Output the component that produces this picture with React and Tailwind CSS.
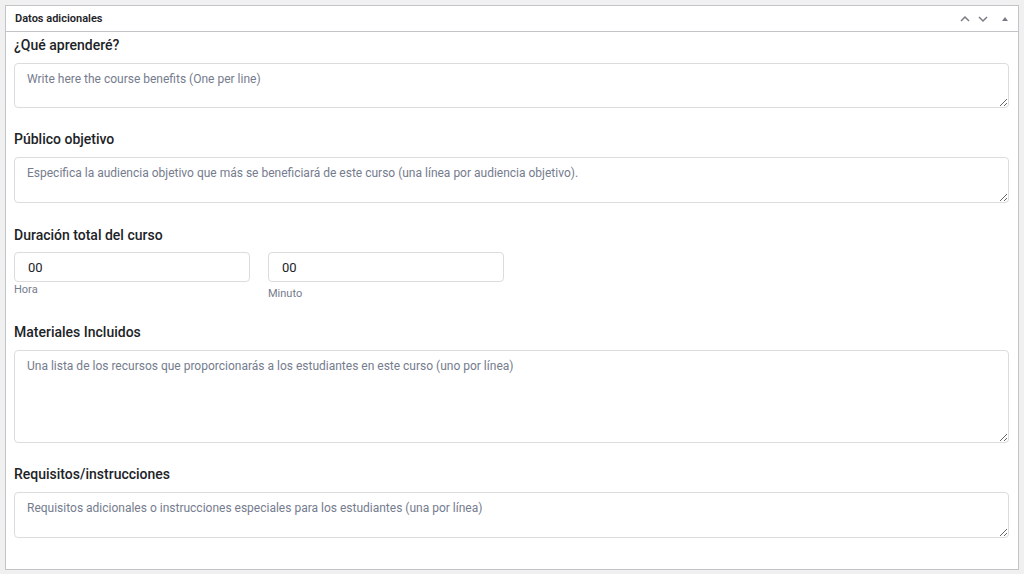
import { useState } from 'react';

function Field({ label, placeholder, height }) {
  return (
    <div className="mb-[21px]">
      <label className="block pt-px text-[14px] leading-[18px] font-medium text-[#1d2327] mb-[9px]">{label}</label>
      <textarea
        placeholder={placeholder}
        className={`block w-full ${height} resize-y rounded-[4px] border border-[#dcdcde] bg-white px-3 py-[6px] text-[12px] leading-[18px] text-[#1d2327] placeholder:text-[#757c8e] outline-none`}
      />
    </div>
  );
}

export default function App() {
  const [hours, setHours] = useState('00');
  const [minutes, setMinutes] = useState('00');

  return (
    <div className="min-h-[574px] bg-[#f0f0f1] p-[5px] font-['Roboto',sans-serif]">
      <div className="border border-[#c3c4c7] bg-white">
        <div className="flex h-[26px] items-center justify-between border-b border-[#c3c4c7] pl-[9px] pr-[7px]">
          <h2 className="pt-px text-[11px] font-semibold text-[#1d2327]">Datos adicionales</h2>
          <div className="flex items-center gap-[6px] text-[#787c82]">
            <svg width="12" height="12" viewBox="0 0 12 12" fill="none" stroke="currentColor" strokeWidth="1.5">
              <path d="M2 8l4-4 4 4" />
            </svg>
            <svg width="12" height="12" viewBox="0 0 12 12" fill="none" stroke="currentColor" strokeWidth="1.5">
              <path d="M2 4l4 4 4-4" />
            </svg>
            <svg width="12" height="12" viewBox="0 0 12 12" className="ml-[4px]" fill="currentColor">
              <path d="M3 8l3-4 3 4z" />
            </svg>
          </div>
        </div>

        <div className="pl-2 pr-[9px] pt-[3px] pb-[10px]">
          <Field label="¿Qué aprenderé?" placeholder="Write here the course benefits (One per line)" height="h-[45px]" />
          <Field
            label="Público objetivo"
            placeholder="Especifica la audiencia objetivo que más se beneficiará de este curso (una línea por audiencia objetivo)."
            height="h-[46px]"
          />

          <div className="mb-[21px]">
            <label className="block pt-[2px] text-[14px] leading-[18px] font-medium text-[#1d2327] mb-[8px]">Duración total del curso</label>
            <div className="flex gap-[18px]">
              <div className="w-[236px]">
                <input
                  value={hours}
                  onChange={(e) => setHours(e.target.value)}
                  className="block h-[30px] w-full rounded-[4px] border border-[#dcdcde] px-[13px] text-[13px] text-[#1d2327] outline-none"
                />
                <div className="mt-[1px] text-[11px] leading-[14px] text-[#757c8e]">Hora</div>
              </div>
              <div className="w-[236px]">
                <input
                  value={minutes}
                  onChange={(e) => setMinutes(e.target.value)}
                  className="block h-[30px] w-full rounded-[4px] border border-[#dcdcde] px-[13px] text-[13px] text-[#1d2327] outline-none"
                />
                <div className="mt-[5px] text-[11px] leading-[14px] text-[#757c8e]">Minuto</div>
              </div>
            </div>
          </div>

          <Field
            label="Materiales Incluidos"
            placeholder="Una lista de los recursos que proporcionarás a los estudiantes en este curso (uno por línea)"
            height="h-[93px]"
          />
          <Field
            label="Requisitos/instrucciones"
            placeholder="Requisitos adicionales o instrucciones especiales para los estudiantes (una por línea)"
            height="h-[46px]"
          />
        </div>
      </div>
    </div>
  );
}
